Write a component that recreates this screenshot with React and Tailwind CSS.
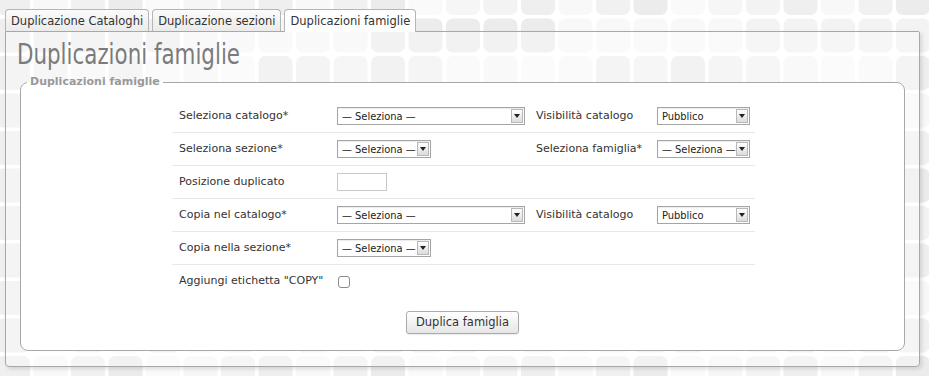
import React from 'react';

const COLS = 26;
const ROWS = 11;
const SHADES = ['#efefef', '#f3f3f3', '#f6f6f6', '#fafafa', '#ececec', '#f1f1f1', '#f8f8f8'];

function TileBackground() {
  const tiles = [];
  for (let r = 0; r < ROWS; r++) {
    for (let c = 0; c < COLS; c++) {
      const seed = (r * 7 + c * 13 + ((r * c) % 5)) % SHADES.length;
      tiles.push(
        <rect
          key={`${r}-${c}`}
          x={-4 + c * 37.5}
          y={-19 + r * 37.5}
          width="34"
          height="34"
          rx="7"
          fill={SHADES[seed]}
        />
      );
    }
  }
  return (
    <svg className="absolute inset-0" width="929" height="376">
      {tiles}
    </svg>
  );
}

function Select({ width, label }) {
  return (
    <div
      className={`flex items-center h-[18px] border border-[#a5a5a5] bg-white ${width} shadow-[inset_0_1px_1px_rgba(0,0,0,0.08)]`}
    >
      <span className="flex-1 pl-[4px] text-[11px] leading-none text-[#222] font-['DejaVu_Sans_Condensed',sans-serif] truncate">
        {label}
      </span>
      <span className="flex items-center justify-center w-[12px] h-[14px] mr-[1px] border border-[#b8b8b8] bg-gradient-to-b from-white to-[#dcdcdc]">
        <svg width="6" height="4" viewBox="0 0 6 4">
          <path d="M0 0 H6 L3 4 Z" fill="#222" />
        </svg>
      </span>
    </div>
  );
}

function Row({ label, children, rightLabel, right, last }) {
  return (
    <div className={`flex items-center h-[33px] pl-[7px] ${last ? '' : 'border-b border-[#e8e8e8]'}`}>
      <div className="w-[158px] text-[11px] text-[#333]">{label}</div>
      <div className="w-[199px] flex items-center">{children}</div>
      <div className="w-[121px] text-[11px] text-[#333]">{rightLabel}</div>
      <div className="flex items-center">{right}</div>
    </div>
  );
}

export default function App() {
  return (
    <div className="relative w-[929px] h-[376px] overflow-hidden bg-white font-['DejaVu_Sans',sans-serif]">
      <TileBackground />
      <div className="relative px-[5px] pt-[9px]">
        {/* tabs */}
        <div className="flex gap-[3px] h-[22px] text-[11.5px] text-[#333]">
          <div className="px-[5px] pt-[3px] border border-b-0 border-[#b5b5b5] rounded-t-[4px] bg-gradient-to-b from-[#fbfbfb] to-[#ebebeb]">
            Duplicazione Cataloghi
          </div>
          <div className="px-[5px] pt-[3px] border border-b-0 border-[#b5b5b5] rounded-t-[4px] bg-gradient-to-b from-[#fbfbfb] to-[#ebebeb]">
            Duplicazione sezioni
          </div>
          <div className="relative z-10 h-[23px] px-[5px] pt-[3px] border border-b-0 border-[#b5b5b5] rounded-t-[4px] bg-white">
            Duplicazioni famiglie
          </div>
        </div>

        {/* panel */}
        <div className="w-[915px] h-[336px] border border-[#a8a8a8] rounded-b-[4px] rounded-tr-[2px] bg-white/30 shadow-[2px_2px_4px_rgba(0,0,0,0.12)] pl-[14px] pr-[14px]">
          <h1 className="mt-[5px] -ml-[3px] h-[34px] text-[29px] leading-[34px] text-[#7b7b7b] font-['DejaVu_Sans_Condensed',sans-serif] scale-x-[0.82] origin-left whitespace-nowrap">
            Duplicazioni famiglie
          </h1>

          <fieldset className="mt-[4px] h-[276px] border border-[#a8a8a8] rounded-[8px] bg-white px-0 pt-[11px]">
            <legend className="ml-[6px] px-[3px] text-[11px] font-bold text-[#999] leading-[14px]">
              Duplicazioni famiglie
            </legend>
            <div className="w-[583px] ml-[151px]">
              <Row
                label="Seleziona catalogo*"
                rightLabel="Visibilità catalogo"
                right={<Select width="w-[93px]" label="Pubblico" />}
              >
                <Select width="w-[188px]" label="— Seleziona —" />
              </Row>
              <Row
                label="Seleziona sezione*"
                rightLabel="Seleziona famiglia*"
                right={<Select width="w-[93px]" label="— Seleziona —" />}
              >
                <Select width="w-[94px]" label="— Seleziona —" />
              </Row>
              <Row label="Posizione duplicato">
                <div className="w-[50px] h-[18px] border border-[#c8c8c8] bg-white" />
              </Row>
              <Row
                label="Copia nel catalogo*"
                rightLabel="Visibilità catalogo"
                right={<Select width="w-[93px]" label="Pubblico" />}
              >
                <Select width="w-[188px]" label="— Seleziona —" />
              </Row>
              <Row label="Copia nella sezione*">
                <Select width="w-[94px]" label="— Seleziona —" />
              </Row>
              <Row label={'Aggiungi etichetta "COPY"'} last>
                <div className="ml-[1px] w-[12px] h-[12px] border border-[#8a8a8a] rounded-[3px] bg-white" />
              </Row>
            </div>
            <div className="flex justify-center mt-[13px]">
              <button className="h-[23px] px-[9px] text-[11.5px] text-[#333] border border-[#ababab] rounded-[3px] bg-gradient-to-b from-white to-[#e6e6e6] shadow-[0_1px_1px_rgba(0,0,0,0.08)]">
                Duplica famiglia
              </button>
            </div>
          </fieldset>
        </div>
      </div>
    </div>
  );
}
